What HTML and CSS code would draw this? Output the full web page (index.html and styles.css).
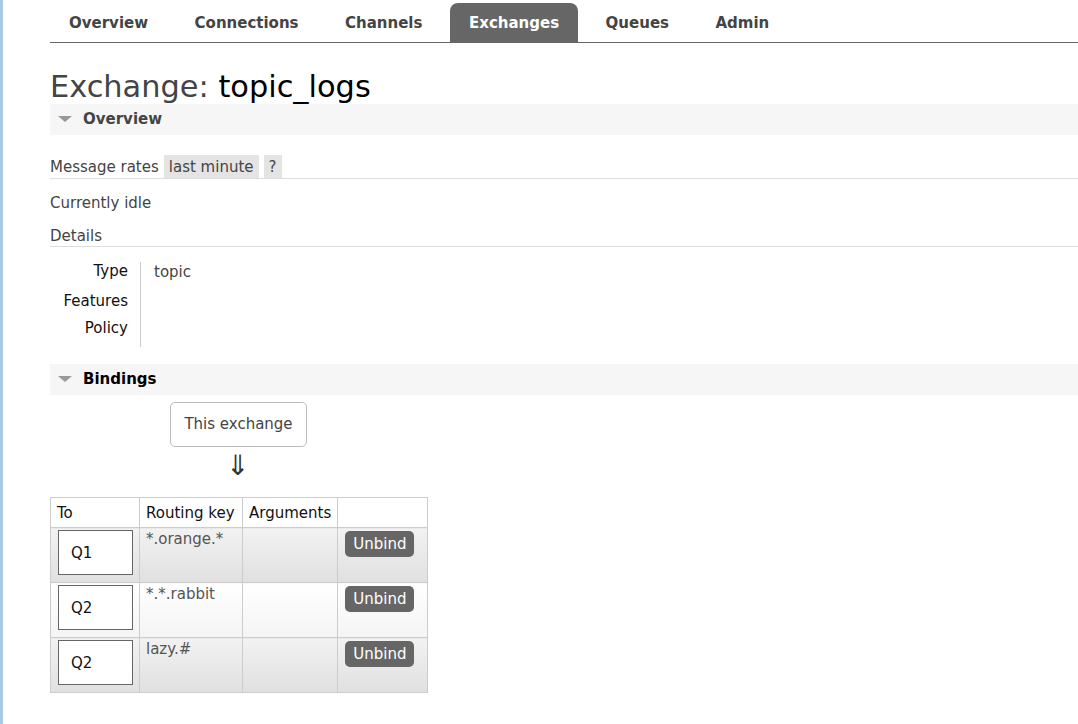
FILE: index.html
```html
<!DOCTYPE html>
<html lang="en">
<head>
    <meta charset="UTF-8">
    <title>Exchange: topic_logs</title>
    <link rel="stylesheet" href="styles.css">
</head>
<body>
    <div class="page">
        <div class="menu">
            <a class="tab">Overview</a>
            <a class="tab">Connections</a>
            <a class="tab">Channels</a>
            <a class="tab selected">Exchanges</a>
            <a class="tab">Queues</a>
            <a class="tab">Admin</a>
        </div>

        <h1>Exchange: <b>topic_logs</b></h1>

        <div class="section-head"><span class="tri"></span>Overview</div>

        <div class="rates">
            <span>Message rates</span>
            <span class="chip">last minute</span>
            <span class="chip">?</span>
        </div>
        <p class="idle">Currently idle</p>
        <div class="details-head">Details</div>

        <div class="facts">
            <div class="labels">
                <div class="lbl lbl-type">Type</div>
                <div class="lbl lbl-feat">Features</div>
                <div class="lbl">Policy</div>
            </div>
            <div class="values">
                <div>topic</div>
            </div>
        </div>

        <div class="section-head bindings"><span class="tri"></span>Bindings</div>

        <div class="diagram">
            <div class="this-ex">This exchange</div>
            <div class="arrow">&#8659;</div>
        </div>

        <table class="list">
            <thead>
                <tr>
                    <th class="c-to">To</th>
                    <th class="c-key">Routing key</th>
                    <th class="c-args">Arguments</th>
                    <th class="c-btn"></th>
                </tr>
            </thead>
            <tbody>
                <tr class="alt1">
                    <td><span class="queue">Q1</span></td>
                    <td>*.orange.*</td>
                    <td></td>
                    <td><button class="unbind">Unbind</button></td>
                </tr>
                <tr class="alt2">
                    <td><span class="queue">Q2</span></td>
                    <td>*.*.rabbit</td>
                    <td></td>
                    <td><button class="unbind">Unbind</button></td>
                </tr>
                <tr class="alt1">
                    <td><span class="queue">Q2</span></td>
                    <td>lazy.#</td>
                    <td></td>
                    <td><button class="unbind">Unbind</button></td>
                </tr>
            </tbody>
        </table>
    </div>
</body>
</html>
```

FILE: styles.css
```css
html, body {
    margin: 0;
    padding: 0;
    height: 100%;
}
body {
    font-family: "DejaVu Sans", Verdana, sans-serif;
    font-size: 15px;
    color: #444;
    background: white;
}
.page {
    min-height: 100%;
    box-sizing: border-box;
    border-left: 3px solid #a9cae2;
    padding-left: 47px;
}
.menu {
    display: flex;
    padding-top: 3px;
    border-bottom: 1px solid #666;
}
.tab {
    display: block;
    height: 39px;
    line-height: 40px;
    padding: 0 19px;
    margin-right: 8.5px;
    font-weight: bold;
    font-size: 15px;
    color: #444;
    border-radius: 8px 8px 0 0;
}
.tab.selected {
    background-color: #666;
    color: white;
}
h1 {
    margin: 26px 0 0 0;
    font-size: 30.4px;
    font-weight: normal;
    line-height: 35px;
    color: #444;
}
h1 b {
    font-weight: normal;
    color: black;
}
.section-head {
    height: 31px;
    line-height: 31px;
    background-color: #f6f6f6;
    font-weight: bold;
    font-size: 15px;
    color: #444;
}
.section-head.bindings {
    margin-top: 17px;
    color: black;
}
.tri {
    display: inline-block;
    width: 0;
    height: 0;
    border-left: 7px solid transparent;
    border-right: 7px solid transparent;
    border-top: 6px solid #999;
    margin: 0 11px 0 8px;
    vertical-align: 2px;
}
.rates {
    margin-top: 20px;
    display: flex;
    align-items: center;
    gap: 5px;
    height: 23px;
    border-bottom: 1px solid #ddd;
}
.chip {
    background-color: #e4e4e4;
    padding: 0 5px;
    height: 23px;
    line-height: 25px;
}
.idle {
    margin: 14px 0 0 0;
    line-height: 20px;
}
.details-head {
    margin-top: 13px;
    line-height: 20px;
    padding-bottom: 0;
    border-bottom: 1px solid #ddd;
}
.facts {
    display: flex;
    margin-top: 15px;
}
.labels {
    width: 78px;
    padding-right: 12px;
    border-right: 1px solid #ccc;
    text-align: right;
    color: #111;
    height: 85px;
}
.lbl {
    line-height: 18px;
}
.lbl-type {
    margin-bottom: 12px;
}
.lbl-feat {
    margin-bottom: 9px;
}
.values {
    padding-left: 13px;
    padding-top: 1px;
    line-height: 18px;
}
.diagram {
    width: 376px;
    display: flex;
    flex-direction: column;
    align-items: center;
    margin-top: 7px;
}
.this-ex {
    border: 1px solid #bbb;
    border-radius: 5px;
    padding: 12px 13px;
    line-height: 19px;
    margin-left: 1px;
}
.arrow {
    font-size: 28px;
    line-height: 30px;
    margin-top: 4px;
    color: #333;
}
.list {
    margin-top: 16px;
    border-collapse: collapse;
    border: 1px solid #ccc;
}
.list th {
    font-weight: normal;
    color: #111;
    text-align: left;
    height: 29px;
    padding: 0 6px;
    border: 1px solid #ccc;
}
.c-to { width: 76px; }
.c-key { width: 90px; }
.c-args { width: 82px; }
.c-btn { width: 77px; }
.list td {
    height: 52px;
    vertical-align: top;
    padding: 2px 6px 0 6px;
    border: 1px solid #ccc;
    color: #555;
}
.list td:first-child {
    padding-left: 7px;
    padding-right: 5px;
}
.alt1 td {
    background: linear-gradient(#f2f2f2, #e0e0e0);
}
.alt2 td {
    background: linear-gradient(#ffffff, #f4f4f4);
}
.queue {
    display: block;
    width: 61px;
    height: 43px;
    line-height: 45px;
    padding-left: 12px;
    border: 1px solid #666;
    background-color: white;
    color: #111;
}
.unbind {
    margin-top: 1px;
    margin-left: 1px;
    font-family: inherit;
    font-size: 15px;
    color: white;
    background-color: #666;
    border: 0;
    border-radius: 5px;
    padding: 0 8px;
    height: 26px;
    line-height: 26px;
}
```
